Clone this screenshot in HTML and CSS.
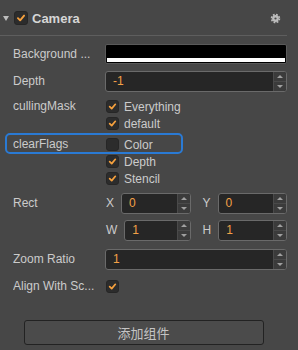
FILE: index.html
```html
<!DOCTYPE html>
<html lang="en">
<head>
  <meta charset="UTF-8" />
  <meta name="viewport" content="width=device-width, initial-scale=1" />
  <title>Camera - Inspector</title>
  <link rel="stylesheet" href="styles.css">
</head>
<body>

  <div class="panel">
    <!-- Component header -->
    <div class="comp-header">
      <span class="fold"></span>
      <span class="check on">
        <svg viewBox="0 0 14 14"><path d="M3.4 7.2 L6 9.7 L10.6 4.2" /></svg>
      </span>
      <span class="comp-title">Camera</span>
      <svg class="gear" viewBox="0 0 12 12">
        <circle cx="6" cy="6" r="3.7" class="gear-body" />
        <circle cx="6" cy="6" r="4.3" class="gear-teeth" />
        <circle cx="6" cy="6" r="1.2" class="gear-hole" />
      </svg>
    </div>

    <!-- Properties -->
    <div class="props">
      <div class="prop">
        <div class="prop-label">Background ...</div>
        <div class="prop-value">
          <div class="color-field"><div class="color-alpha"></div></div>
        </div>
      </div>

      <div class="prop">
        <div class="prop-label">Depth</div>
        <div class="prop-value">
          <div class="num-field">
            <span class="num-text">-1</span>
            <span class="spin"><i class="up"></i><i class="down"></i></span>
          </div>
        </div>
      </div>

      <div class="prop">
        <div class="prop-label short">cullingMask</div>
        <div class="prop-value list">
          <div class="item"><span class="check on"><svg viewBox="0 0 14 14"><path d="M3.4 7.2 L6 9.7 L10.6 4.2" /></svg></span>Everything</div>
          <div class="item"><span class="check on"><svg viewBox="0 0 14 14"><path d="M3.4 7.2 L6 9.7 L10.6 4.2" /></svg></span>default</div>
        </div>
      </div>

      <div class="prop tight">
        <div class="focus-ring"></div>
        <div class="prop-label short">clearFlags</div>
        <div class="prop-value list">
          <div class="item"><span class="check"></span>Color</div>
          <div class="item"><span class="check on"><svg viewBox="0 0 14 14"><path d="M3.4 7.2 L6 9.7 L10.6 4.2" /></svg></span>Depth</div>
          <div class="item"><span class="check on"><svg viewBox="0 0 14 14"><path d="M3.4 7.2 L6 9.7 L10.6 4.2" /></svg></span>Stencil</div>
        </div>
      </div>

      <div class="prop">
        <div class="prop-label">Rect</div>
        <div class="prop-value vec">
          <div class="vec-row">
            <div class="half">
              <span class="axis">X</span>
              <div class="num-field">
                <span class="num-text">0</span>
                <span class="spin"><i class="up"></i><i class="down"></i></span>
              </div>
            </div>
            <div class="half">
              <span class="axis">Y</span>
              <div class="num-field">
                <span class="num-text">0</span>
                <span class="spin"><i class="up"></i><i class="down"></i></span>
              </div>
            </div>
          </div>
          <div class="vec-row">
            <div class="half">
              <span class="axis">W</span>
              <div class="num-field">
                <span class="num-text">1</span>
                <span class="spin"><i class="up"></i><i class="down"></i></span>
              </div>
            </div>
            <div class="half">
              <span class="axis">H</span>
              <div class="num-field">
                <span class="num-text">1</span>
                <span class="spin"><i class="up"></i><i class="down"></i></span>
              </div>
            </div>
          </div>
        </div>
      </div>

      <div class="prop loose">
        <div class="prop-label">Zoom Ratio</div>
        <div class="prop-value">
          <div class="num-field">
            <span class="num-text">1</span>
            <span class="spin"><i class="up"></i><i class="down"></i></span>
          </div>
        </div>
      </div>

      <div class="prop">
        <div class="prop-label">Align With Sc...</div>
        <div class="prop-value toggle">
          <span class="check on"><svg viewBox="0 0 14 14"><path d="M3.4 7.2 L6 9.7 L10.6 4.2" /></svg></span>
        </div>
      </div>
    </div>

    <button class="add-btn">添加组件</button>
  </div>

</body>
</html>
```

FILE: styles.css
```css
/* Global reset */
* {
  margin: 0;
  padding: 0;
  box-sizing: border-box;
}

body {
  background: #474747;
  font-family: "Liberation Sans", Arial, "Noto Sans CJK SC", sans-serif;
  font-size: 12px;
  color: #cbcbcb;
  height: 100vh;
  overflow: hidden;
}

.panel {
  width: 287px;
}

/* Header */
.comp-header {
  height: 36px;
  display: flex;
  align-items: center;
  padding: 1px 0 0 3px;
  border-bottom: 1px solid #5e5e5e;
}
.fold {
  width: 0;
  height: 0;
  border-left: 3px solid transparent;
  border-right: 3px solid transparent;
  border-top: 5px solid #bdbdbd;
  margin-right: 5px;
}
.comp-header .check {
  width: 14px;
  height: 14px;
}
.comp-title {
  font-weight: bold;
  font-size: 13px;
  color: #d6d6d6;
  margin-left: 4px;
  flex: 1;
}
.gear {
  width: 11px;
  height: 11px;
  margin-right: 6px;
}
.gear-body {
  fill: #bcbcbc;
}
.gear-teeth {
  fill: none;
  stroke: #bcbcbc;
  stroke-width: 1.8;
  stroke-dasharray: 1.9 1.48;
}
.gear-hole {
  fill: #474747;
}

/* Checkbox */
.check {
  width: 13px;
  height: 13px;
  border-radius: 3px;
  background: #2c2c2c;
  border: 1px solid #262626;
  display: inline-flex;
  align-items: center;
  justify-content: center;
  flex-shrink: 0;
}
.check svg {
  width: 100%;
  height: 100%;
}
.check path {
  fill: none;
  stroke: #f6a13e;
  stroke-width: 2.2;
  stroke-linecap: round;
  stroke-linejoin: round;
}

/* Property rows */
.props {
  display: flex;
  flex-direction: column;
  gap: 6px;
  padding: 8px 0 0 13px;
}
.prop {
  display: flex;
  position: relative;
}
.prop.tight {
  margin-top: -2px;
}
.prop.loose {
  margin-top: 2px;
}
.prop-label {
  width: 92px;
  line-height: 21px;
  white-space: nowrap;
  overflow: hidden;
}
.prop-label.short {
  line-height: 17px;
}
.prop-value {
  flex: 1;
}

.focus-ring {
  position: absolute;
  left: -8px;
  top: -3px;
  width: 178px;
  height: 21px;
  border: 2px solid #2a7ad4;
  border-radius: 5px;
}

/* Color field */
.color-field {
  height: 20px;
  background: #000;
  border: 1px solid #5a5a5a;
  border-radius: 2px;
  display: flex;
  flex-direction: column;
  justify-content: flex-end;
  padding: 0 1px 1px;
}
.color-alpha {
  height: 4px;
  background: #fff;
}

/* Number field */
.num-field {
  height: 21px;
  display: flex;
  flex: 1;
  background: #262626;
  border: 1px solid #6a6a6a;
  border-radius: 3px;
  overflow: hidden;
}
.num-text {
  flex: 1;
  padding-left: 7px;
  line-height: 19px;
  color: #f3a146;
}
.spin {
  width: 13px;
  display: flex;
  flex-direction: column;
  background: #3b3b3b;
  border-left: 1px solid #4a4a4a;
}
.spin i {
  flex: 1;
  display: flex;
  align-items: center;
  justify-content: center;
}
.spin i + i {
  border-top: 1px solid #4a4a4a;
}
.spin i::after {
  content: "";
  border-left: 3px solid transparent;
  border-right: 3px solid transparent;
}
.spin .up::after {
  border-bottom: 3px solid #a0a0a0;
}
.spin .down::after {
  border-top: 3px solid #a0a0a0;
}

/* Checkbox list */
.list .item {
  height: 17px;
  display: flex;
  align-items: center;
  gap: 5px;
  padding-left: 1px;
}

/* Vector (Rect) */
.vec {
  display: flex;
  flex-direction: column;
  gap: 6px;
}
.vec-row {
  display: flex;
  gap: 11px;
}
.half {
  flex: 1;
  display: flex;
}
.axis {
  line-height: 21px;
  padding: 0 7px 0 1px;
}

.toggle {
  height: 21px;
  display: flex;
  align-items: center;
  padding-left: 1px;
}

/* Add component button */
.add-btn {
  display: block;
  width: 240px;
  height: 25px;
  margin: 23px auto 0;
  background: #4b4b4b;
  border: 1px solid #222;
  border-radius: 3px;
  color: #c4c4c4;
  font-family: "Liberation Sans", Arial, "Noto Sans CJK SC", sans-serif;
  font-size: 13px;
}
```
